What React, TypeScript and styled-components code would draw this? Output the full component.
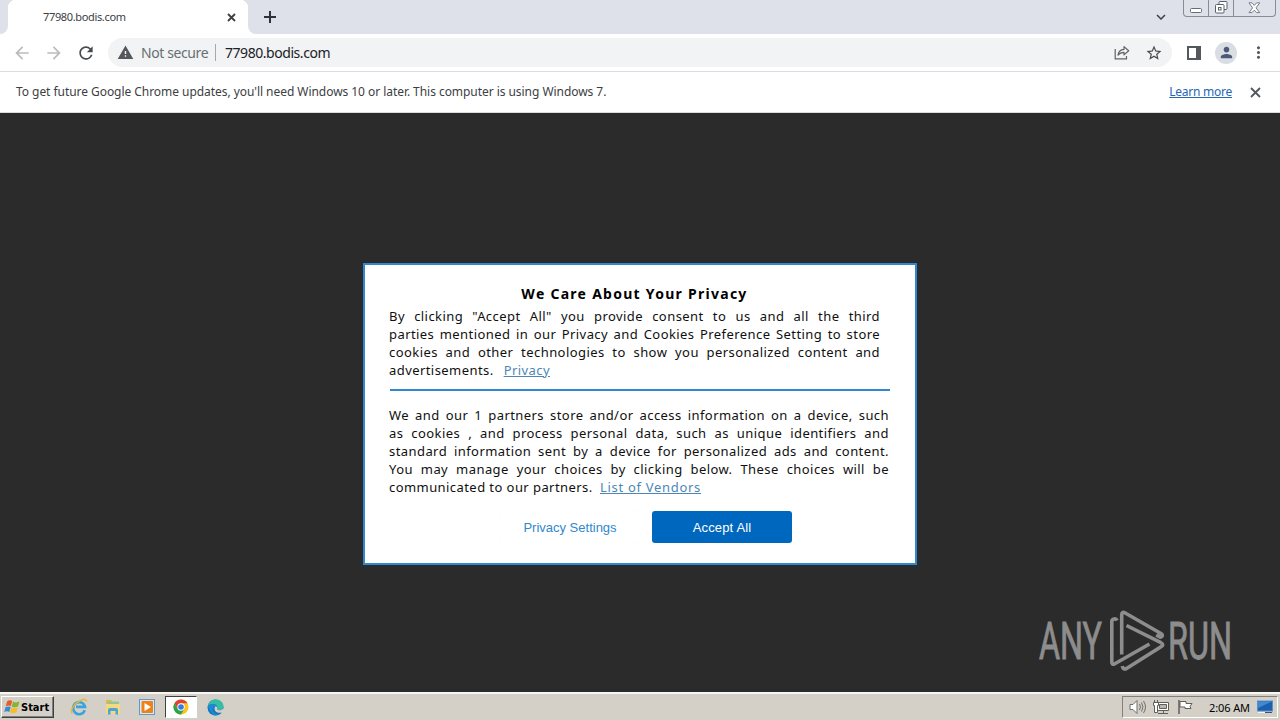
import React from 'react';
import styled, { createGlobalStyle } from 'styled-components';
import {
  MdArrowBack,
  MdArrowForward,
  MdRefresh,
  MdWarning,
  MdStarBorder,
  MdMoreVert,
  MdPerson,
  MdKeyboardArrowDown,
} from 'react-icons/md';


const CONSENT_LINES = [
  'By clicking "Accept All" you provide consent to us and all the third',
  'parties mentioned in our Privacy and Cookies Preference Setting to store',
  'cookies and other technologies to show you personalized content and',
];

const PARTNER_LINES = [
  'We and our 1 partners store and/or access information on a device, such',
  'as cookies , and process personal data, such as unique identifiers and',
  'standard information sent by a device for personalized ads and content.',
  'You may manage your choices by clicking below. These choices will be',
];

export default function App() {
  return (
    <Screen>
      <GlobalStyle />
      <TabStrip />
      <Toolbar />
      <InfoBar />

      <PageContent>
        <PrivacyDialog />
        <Watermark />
      </PageContent>

      <Taskbar />
    </Screen>
  );
}

/*
 * Browser
 */

const CloseIcon: React.FC<{ size: number; color: string }> = ({ size, color }) => (
  <svg width={size} height={size} viewBox={`0 0 ${size} ${size}`} stroke={color} strokeWidth="1.800">
    <path d={`M1 1L${size - 1} ${size - 1}M${size - 1} 1L1 ${size - 1}`} />
  </svg>
);

const TabStrip: React.FC = () => (
  <TabStripContainer>
    <PreviousTabEdge />
    <ActiveTab>
      <TabTitle>77980.bodis.com</TabTitle>
      <CloseIcon size={9} color="#3c4043" />
    </ActiveTab>
    <NextTabEdge>
      <NewTabButton width="12" height="12" viewBox="0 0 12 12">
        <path d="M6 0v12M0 6h12" stroke="#2f3337" strokeWidth="2" />
      </NewTabButton>
    </NextTabEdge>

    <TabSearch><MdKeyboardArrowDown size={18} color="#3c4043" /></TabSearch>

    <WindowControls>
      <ControlButton $width={26}>
        <svg width="13" height="6" viewBox="0 0 13 6">
          <rect x="0.5" y="0.5" width="11" height="4" rx="1" fill="#fff" stroke="#666b75" />
        </svg>
      </ControlButton>
      <ControlButton $width={26}>
        <svg width="13" height="13" viewBox="0 0 13 13" fill="#fff" stroke="#5b606b">
          <rect x="4" y="0.5" width="8" height="8" rx="1" />
          <rect x="0.5" y="3.5" width="8.5" height="8.5" rx="1" />
          <rect x="3.5" y="6.5" width="2.5" height="2.5" />
        </svg>
      </ControlButton>
      <ControlButton $width={43}>
        <svg width="13" height="12" viewBox="0 0 13 12">
          <path
            d="M1 .8h3L6.3 3.400l2.400-2.600h3L8 5.900l3.700 4.700h-3L6.300 8.200 4 10.600H1l3.600-4.700z"
            fill="#fff"
            stroke="#6c717a"
            strokeWidth="0.9"
          />
        </svg>
      </ControlButton>
    </WindowControls>
  </TabStripContainer>
);

const Toolbar: React.FC = () => (
  <ToolbarContainer>
    <NavButtons>
      <MdArrowBack size={20} color="#babcbe" />
      <MdArrowForward size={20} color="#babcbe" />
      <MdRefresh size={20} color="#474b4f" />
    </NavButtons>

    <AddressBar>
      <MdWarning size={17} color="#54585c" />
      <SecurityLabel>Not secure</SecurityLabel>
      <AddressDivider />
      <AddressText>77980.bodis.com</AddressText>

      <AddressActions>
        <svg width="16" height="15" viewBox="0 0 16 15" fill="none" stroke="#5f6368" strokeWidth="1.2">
          <path d="M1.200 4v9.800h11.300V11" />
          <path d="M4 10.200c.5-3.800 2.600-5.600 6-5.800V1.600l4.700 4.200-4.700 4.100V7.300c-2.700 0-4.500.8-6 2.900z" strokeLinejoin="round" />
        </svg>
        <MdStarBorder size={18} color="#474b4f" />
      </AddressActions>
    </AddressBar>

    <SidePanelIcon width="14" height="14" viewBox="0 0 14 14">
      <path d="M0 0h14v14H0zM2 2v10h7V2z" fill="#54585c" fillRule="evenodd" />
    </SidePanelIcon>
    <Avatar><MdPerson size={17} color="#4c5a78" /></Avatar>
    <MdMoreVert size={19} color="#54585c" />
  </ToolbarContainer>
);

const InfoBar: React.FC = () => (
  <InfoBarContainer>
    <InfoText>
      To get future Google Chrome updates, you'll need Windows 10 or later. This computer is using Windows 7.
    </InfoText>
    <LearnMore>Learn more</LearnMore>
    <CloseIcon size={11} color="#54585c" />
  </InfoBarContainer>
);

/*
 * Page
 */

const PrivacyDialog: React.FC = () => (
  <Dialog>
    <DialogTitle>We Care About Your Privacy</DialogTitle>

    <Paragraph $width={491}>
      {CONSENT_LINES.map((line) => (
        <Line key={line}>{line}</Line>
      ))}
      <LastLine $width={161}>
        <span>advertisements.</span>
        <DialogLink>Privacy</DialogLink>
      </LastLine>
    </Paragraph>

    <Rule />

    <Paragraph $width={500}>
      {PARTNER_LINES.map((line) => (
        <Line key={line}>{line}</Line>
      ))}
      <LastLine $width={312}>
        <span>communicated to our partners.</span>
        <DialogLink $spacing={0.7}>List of Vendors</DialogLink>
      </LastLine>
    </Paragraph>

    <DialogButtons>
      <DialogButton>Privacy Settings</DialogButton>
      <DialogButton $primary>Accept All</DialogButton>
    </DialogButtons>
  </Dialog>
);

const Watermark: React.FC = () => (
  <WatermarkSvg width="206" height="66" viewBox="-4 0 206 66">
    <g
      fill="#8d8d8d"
      stroke="#8d8d8d"
      strokeWidth="0.9"
      fontFamily="Roboto, sans-serif"
      fontSize="51"
    >
      <text x="0" y="50" textLength="63" lengthAdjust="spacingAndGlyphs">ANY</text>
      <text x="129" y="50" textLength="64" lengthAdjust="spacingAndGlyphs">RUN</text>
    </g>
    <g fill="none" stroke="#8d8d8d" strokeWidth="3.600" strokeLinejoin="round">
      <path d="M78 11.500c-1-2.500-5.200-2-5.200 1V53q0 3.500 3 1.700L110.500 35" />
      <path d="M82.700 45.500V6q0-4 3.500-2L122 24.500q3.200 2.200-.8 3.700l-4-2.200" />
      <path d="M87.500 16.500L122 33.700q3.500 2 0 4L87.500 59.500q-3.500 1.500-4.200-2.500" />
    </g>
  </WatermarkSvg>
);

/*
 * Taskbar
 */

const Taskbar: React.FC = () => (
  <TaskbarContainer>
    <StartButton>
      <svg width="17" height="16" viewBox="0 0 17 16">
        <path d="M3.200 2.200Q6 .4 8.200 2L6.900 7Q4.500 5.700 1.700 7.200z" fill="#e8592b" />
        <path d="M9 2.500q2.700 1.700 6.500.1L14 7.600Q10.500 9 7.800 7.400z" fill="#83b52e" />
        <path d="M1.500 8.200Q4.200 6.700 6.700 8L5.300 13Q3 11.700.2 13z" fill="#378bd5" />
        <path d="M7.500 8.400q2.700 1.600 6.300.2l-1.400 5Q9 15 6.100 13.300z" fill="#f6bd27" />
      </svg>
      Start
    </StartButton>

    <QuickLaunch>
      <LaunchItem>
        <svg width="18" height="18" viewBox="0 0 18 18" fill="none">
          <path d="M14.800 12.200A6 6 0 1 1 15 8.900H6" stroke="#39a3df" strokeWidth="2.600" />
          <path d="M2.500 15.500C-1 13.500 4 5.500 10.500 2.500c4-2 6.500-1.400 5.500 1.200" stroke="#e6b535" strokeWidth="1.400" />
        </svg>
      </LaunchItem>
      <LaunchItem>
        <svg width="18" height="18" viewBox="0 0 18 18">
          <path d="M2 2h5l1 1.500h7V15H2z" fill="#dcb850" />
          <path d="M4 4h11v5H4z" fill="#8fc79a" />
          <path d="M2 6h14v10H2z" fill="#f3da82" />
          <path d="M4 16.500v-4.500q0-2 2-2h6q2 0 2 2v4.500h-2.500V13h-5v3.500z" fill="#4ea4d8" />
        </svg>
      </LaunchItem>
      <LaunchItem>
        <svg width="18" height="18" viewBox="0 0 18 18">
          <rect x="1.500" y="1.500" width="15" height="15" fill="#d8e9f7" stroke="#6099cc" />
          <rect x="3.500" y="3" width="11.500" height="12" rx="1" fill="#ef8118" />
          <path d="M6.500 5v8L13 9z" fill="#fff" />
        </svg>
      </LaunchItem>
      <LaunchItem $active>
        <svg width="16" height="16" viewBox="0 0 16 16">
          <circle cx="8" cy="8" r="7.500" fill="#f7c51e" />
          <path d="M1.500 4.250A7.500 7.500 0 0 1 14.500 4.250H8L4.750 9.900z" fill="#df4335" />
          <path d="M1.500 4.250A7.500 7.500 0 0 0 8 15.500l3.250-5.600H4.750z" fill="#2ba24c" />
          <circle cx="8" cy="8" r="3.700" fill="#fff" />
          <circle cx="8" cy="8" r="2.800" fill="#3b78e7" />
        </svg>
      </LaunchItem>
      <LaunchItem>
        <svg width="17" height="17" viewBox="0 0 17 17">
          <circle cx="8.500" cy="8.500" r="8" fill="#1675bd" />
          <path d="M.7 7.500C1.500 3 5 .5 8.500.5c5 0 8 3.500 8 6.800 0 2.500-2 4-4.500 4-2 0-2.500-.8-1.800-1.700C11 7 8.500 5 6 5 3.500 5 1.500 6 .7 7.500z" fill="#37bda5" />
          <path d="M10.200 9.600c-.6 1 .5 1.700 1.800 1.700 1.800 0 3.400-.6 4.200-1.800l.8 3-1.600 1C11 14.500 7.500 13 7.500 9.500c0-1 .5-2 1.400-2.300 1 .4 1.600 1.300 1.300 2.400z" fill="#d4d0c8" />
          <path d="M.7 7.500C2 5.600 4 5 6 5c1.500 0 3 .9 3.700 2-3 0-4.700 2.500-3.700 5 1 2.700 4 3.500 7 2.800-2 1.500-4.500 2-7 1.200" fill="#1c8bd1" />
        </svg>
      </LaunchItem>
    </QuickLaunch>

    <Tray>
      <svg width="17" height="16" viewBox="0 0 17 16" fill="none" stroke="#6e6e6b">
        <path d="M1 5.500h3L8 1.500v13L4 10.500H1z" fill="#fff" />
        <path d="M10.500 5q2 3 0 6M12.500 3.500q3 4.500 0 9M14.500 2q4 6 0 12" />
      </svg>
      <svg width="17" height="16" viewBox="0 0 17 16" fill="#fff" stroke="#5e5e5b">
        <path d="M4.500 3.500h11v8h-11z" />
        <path d="M6.500 5.500h7v4h-7z" fill="#b9b7b0" />
        <path d="M5 14.500h10M10.500 11.500v3" />
        <path d="M.5 3.500h5v3h-1v7h-3v-7h-1zM1.500 1v2.500M4.500 1v2.500" />
      </svg>
      <svg width="17" height="16" viewBox="0 0 17 16" fill="#fff" stroke="#5e5e5b">
        <path d="M2 1v14" strokeWidth="1.500" />
        <path d="M3 2.500h6v2h6l-2 3 1 2H8v-1.500H3z" />
      </svg>
      <Clock>2:06 AM</Clock>
      <svg width="16" height="14" viewBox="0 0 16 14">
        <rect x="0.500" y="1" width="15" height="10" fill="#1c5fae" stroke="#5c8fc7" />
        <path d="M1 1.500h14L1 8z" fill="#3f8ad1" />
        <path d="M1 12h7v1H1z" fill="#f4f4f4" />
        <path d="M8 12h7v1H8z" fill="#34557c" />
      </svg>
    </Tray>
  </TaskbarContainer>
);

/*
 * Styles
 */

const GlobalStyle = createGlobalStyle`
  body {
    margin: 0;
    overflow: hidden;
  }

  svg {
    display: block;
    flex-shrink: 0;
  }
`;

const Screen = styled.div`
  display: flex;
  flex-direction: column;
  width: 1280px;
  height: 720px;
  overflow: hidden;
  font-family: 'Noto Sans', sans-serif;
  background: #2b2b2b;
`;

const TabStripContainer = styled.div`
  display: flex;
  height: 34px;
  background: #fff;
`;

const PreviousTabEdge = styled.div`
  width: 8px;
  background: #dee1e9;
  border-bottom-right-radius: 8px;
`;

const ActiveTab = styled.div`
  box-sizing: border-box;
  display: flex;
  align-items: center;
  justify-content: space-between;
  width: 240px;
  padding: 0 12px 0 35px;
  background: radial-gradient(circle at 8px 8px, #fff 8px, #dee1e9 8.5px) 0 0 / 8px 8px no-repeat,
    radial-gradient(circle at 0 8px, #fff 8px, #dee1e9 8.5px) 100% 0 / 8px 8px no-repeat, #fff;
`;

const TabTitle = styled.span`
  margin-top: -1px;
  font-size: 11px;
  letter-spacing: -0.35px;
  color: #3c4043;
`;

const NextTabEdge = styled.div`
  display: flex;
  align-items: center;
  width: 900px;
  background: #dee1e9;
  border-bottom-left-radius: 8px;
`;

const NewTabButton = styled.svg`
  margin-left: 16px;
`;

const TabSearch = styled.div`
  display: flex;
  align-items: center;
  width: 35px;
  padding-left: 4px;
  box-sizing: border-box;
  background: #dee1e9;
`;

const WindowControls = styled.div`
  display: flex;
  flex: 1;
  align-items: flex-start;
  background: #dee1e9;
`;

const ControlButton = styled.div<{ $width: number }>`
  box-sizing: border-box;
  display: flex;
  align-items: flex-end;
  justify-content: center;
  width: ${({ $width }) => $width}px;
  height: 17px;
  padding-bottom: 2px;
  border: 1px solid #888c95;
  border-top: none;
  margin-right: -1px;

  &:first-child {
    border-bottom-left-radius: 4px;
  }

  &:last-child {
    border-bottom-right-radius: 4px;
  }
`;

const ToolbarContainer = styled.div`
  box-sizing: border-box;
  display: flex;
  align-items: center;
  height: 38px;
  padding: 0 12px;
  border-bottom: 1px solid #dadce0;
  background: #fff;
`;

const NavButtons = styled.div`
  display: flex;
  gap: 12px;
  width: 96px;
`;

const AddressBar = styled.div`
  box-sizing: border-box;
  display: flex;
  align-items: center;
  width: 1064px;
  height: 29px;
  padding: 0 9px;
  border-radius: 15px;
  background: #f1f3f4;
`;

const SecurityLabel = styled.span`
  width: 74px;
  margin-left: 7px;
  font-size: 14px;
  letter-spacing: -0.4px;
  white-space: nowrap;
  color: #6a6e72;
`;

const AddressDivider = styled.div`
  width: 1px;
  height: 17px;
  background: #a5a8ac;
`;

const AddressText = styled.span`
  margin-left: 9px;
  font-size: 14px;
  letter-spacing: -0.45px;
  color: #202124;
`;

const AddressActions = styled.div`
  display: flex;
  align-items: center;
  gap: 15px;
  margin-left: auto;
`;

const SidePanelIcon = styled.svg`
  margin-left: 15px;
`;

const Avatar = styled.div`
  display: flex;
  align-items: center;
  justify-content: center;
  width: 22px;
  height: 22px;
  margin: 0 12px 0 14px;
  border-radius: 50%;
  background: #dadde3;
`;

const InfoBarContainer = styled.div`
  box-sizing: border-box;
  display: flex;
  align-items: center;
  height: 41px;
  padding: 0 19px 0 16px;
  border-bottom: 1px solid #dadce0;
  background: #fff;
`;

const InfoText = styled.span`
  flex: 1;
  margin-top: -2px;
  font-size: 12px;
  letter-spacing: -0.05px;
  color: #3c4043;
`;

const LearnMore = styled.span`
  margin: -2px 18px 0 0;
  font-size: 12px;
  letter-spacing: -0.25px;
  text-decoration: underline;
  color: #2467b5;
`;

const PageContent = styled.div`
  position: relative;
  box-sizing: border-box;
  display: flex;
  justify-content: center;
  align-items: flex-start;
  height: 579px;
  padding-top: 150px;
  background: #2b2b2b;
`;

const Dialog = styled.div`
  box-sizing: border-box;
  display: flex;
  flex-direction: column;
  width: 554px;
  height: 302px;
  padding: 20px 24px 0;
  border: 2px solid #3089ce;
  background: #fff;
  color: #101010;
`;

const DialogTitle = styled.div`
  width: 491px;
  height: 22px;
  font-size: 14px;
  font-weight: 700;
  line-height: 18px;
  letter-spacing: 1.27px;
  text-align: center;
  color: #000;
`;

const Paragraph = styled.div<{ $width: number }>`
  width: ${({ $width }) => $width}px;
  font-size: 13px;
  line-height: 18px;
  letter-spacing: 0.43px;
`;

const Line = styled.div`
  white-space: nowrap;
  text-align: justify;
  text-align-last: justify;
`;

const LastLine = styled.div<{ $width: number }>`
  display: flex;
  justify-content: space-between;
  width: ${({ $width }) => $width}px;
  white-space: nowrap;
`;

const DialogLink = styled.a<{ $spacing?: number }>`
  letter-spacing: ${({ $spacing = 0.43 }) => $spacing}px;
  text-decoration: underline;
  color: #4c87b5;
`;

const Rule = styled.div`
  width: 500px;
  height: 2px;
  margin: 10px 0 15px 1px;
  background: #3089ce;
`;

const DialogButtons = styled.div`
  display: flex;
  gap: 12px;
  margin: 15px 0 0 111px;
`;

const DialogButton = styled.button<{ $primary?: boolean }>`
  width: 140px;
  height: 32px;
  padding: 0;
  border: none;
  border-radius: 3px;
  background: ${({ $primary }) => ($primary ? '#0067bf' : '#fff')};
  color: ${({ $primary }) => ($primary ? '#fff' : '#3089ce')};
  box-shadow: ${({ $primary }) => ($primary ? 'none' : '0 0 1px #eee')};
  font-family: 'Liberation Sans', sans-serif;
  font-size: 13px;
  letter-spacing: ${({ $primary }) => ($primary ? '0.15px' : '0')};
`;

const WatermarkSvg = styled.svg`
  position: absolute;
  left: 1035px;
  top: 496px;
  overflow: visible;
`;

const TaskbarContainer = styled.div`
  box-sizing: border-box;
  display: flex;
  align-items: center;
  height: 28px;
  padding: 0 2px 0 1px;
  border-top: 2px solid #f7f6f3;
  background: #d4d0c8;
`;

const StartButton = styled.div`
  box-sizing: border-box;
  display: flex;
  align-items: center;
  width: 53px;
  height: 22px;
  padding-left: 2px;
  border: 1px solid;
  border-color: #fff #404040 #404040 #fff;
  box-shadow: inset -1px -1px 0 #808080;
  font-family: 'DejaVu Sans Condensed', 'DejaVu Sans', sans-serif;
  font-size: 11px;
  font-weight: 700;
  color: #000;
`;

const QuickLaunch = styled.div`
  display: flex;
  margin-left: 9px;
`;

const LaunchItem = styled.div<{ $active?: boolean }>`
  box-sizing: border-box;
  display: flex;
  align-items: center;
  justify-content: center;
  width: 32px;
  height: 22px;
  margin-right: 2px;
  border: 1px solid;
  border-color: ${({ $active }) => ($active ? '#404040 #fff #fff #404040' : 'transparent')};
  background: ${({ $active }) => ($active ? '#fff' : 'transparent')};
`;

const Tray = styled.div`
  box-sizing: border-box;
  display: flex;
  align-items: center;
  gap: 7px;
  width: 156px;
  height: 22px;
  margin-left: auto;
  padding-left: 6px;
  border: 1px solid;
  border-color: #808080 #fff #fff #808080;
`;

const Clock = styled.span`
  width: 41px;
  margin-left: 8px;
  font-size: 11px;
  letter-spacing: -0.1px;
  white-space: nowrap;
  color: #000;
`;
